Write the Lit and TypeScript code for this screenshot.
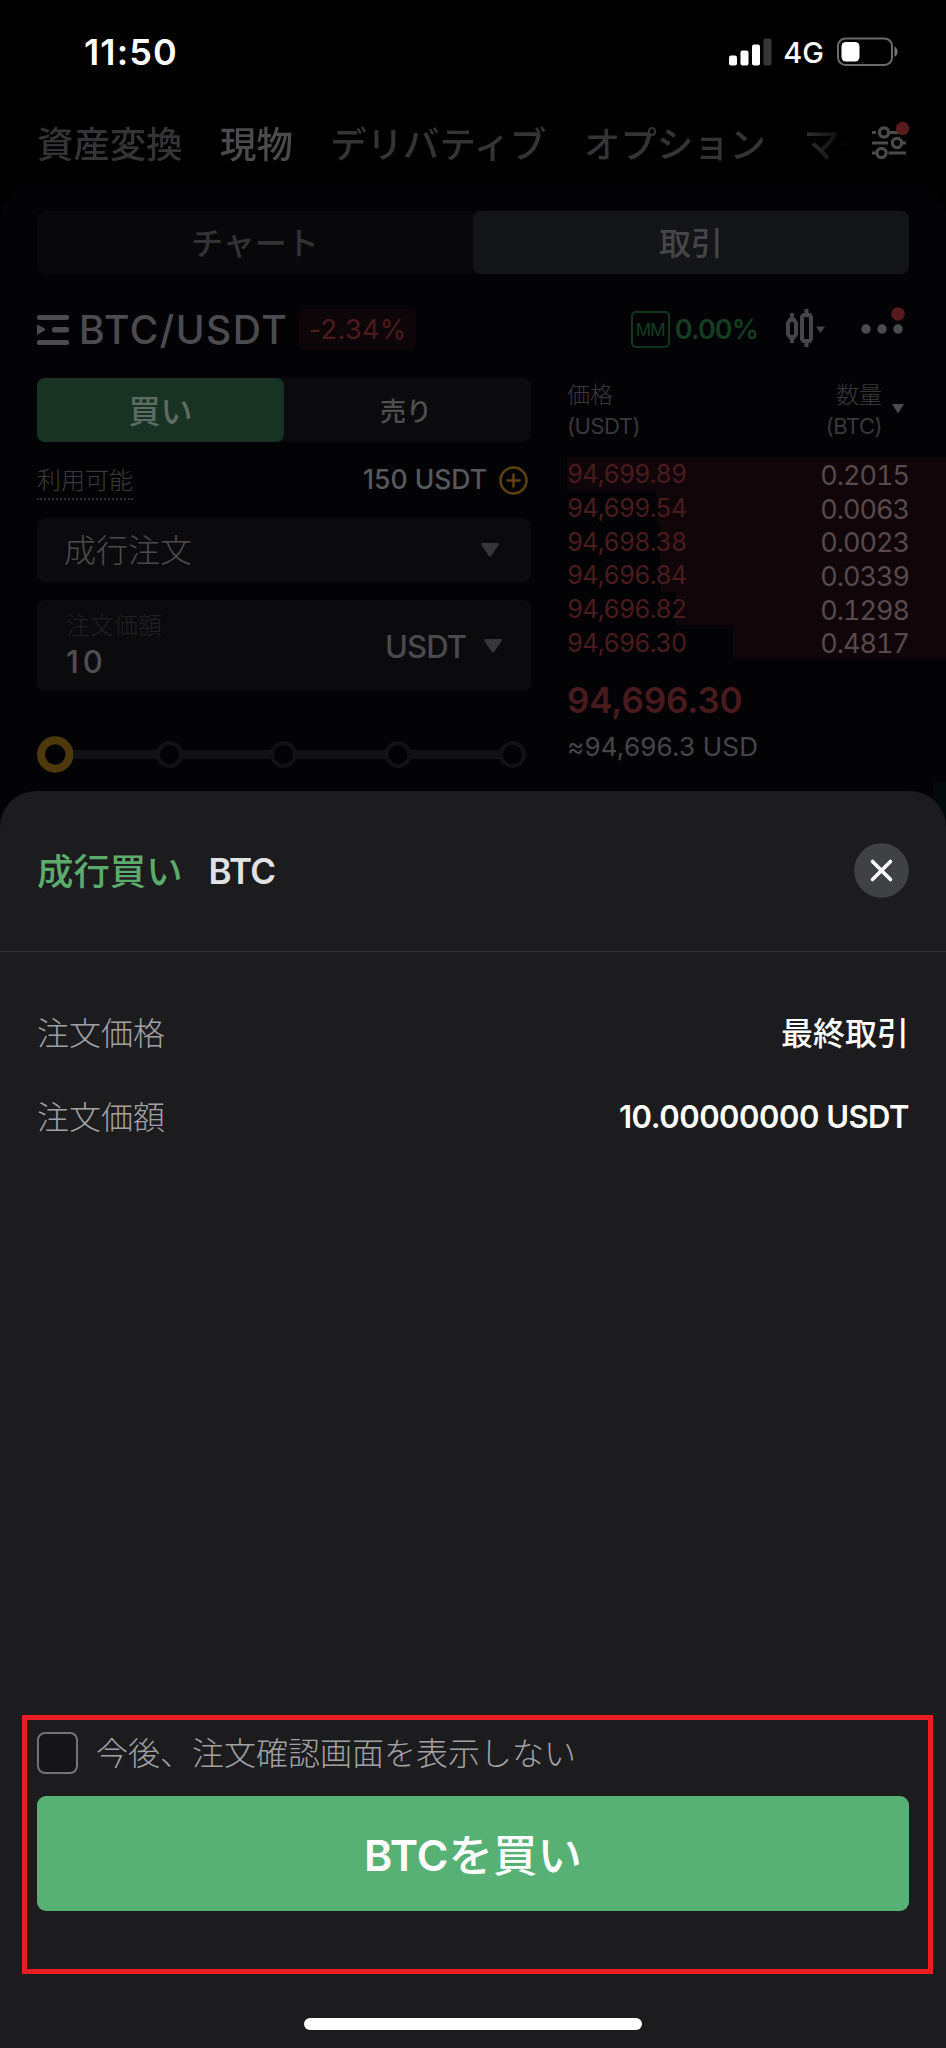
import { LitElement, html, css, svg } from "lit";
import { customElement } from "lit/decorators.js";
import { styleMap } from "lit/directives/style-map.js";

const fonts = css`
  * { box-sizing: border-box; }
  .l, .j { display: block; white-space: nowrap; line-height: 1; }
  .l { font-family: Inter, "Noto Sans CJK JP", sans-serif; }
  .j { font-family: "Noto Sans CJK JP", sans-serif; }
  svg { display: block; flex: none; }
`;

@customElement("status-bar")
class StatusBar extends LitElement {
  static styles = [fonts, css`
    :host { display: flex; height: 104px; padding: 0 48px 0 84px; align-items: center; color: #fff; }
    .time { font-size: 36px; font-weight: 600; letter-spacing: 1.1px; flex: 1; }
    .net { font-size: 29px; font-weight: 500; margin: 0 13px 0 11px; }
  `];
  render() {
    return html`
      <span class="l time">11:50</span>
      <svg width="43" height="28" viewBox="0 0 43 28">
        <rect x="0" y="17.5" width="8" height="10" rx="2" fill="#fff"/>
        <rect x="11.5" y="12.5" width="8" height="15" rx="2" fill="#fff"/>
        <rect x="23" y="6.5" width="8" height="21" rx="2" fill="#fff"/>
        <rect x="34.5" y="0.5" width="8" height="27" rx="2" fill="#363636"/>
      </svg>
      <span class="l net">4G</span>
      <svg width="61" height="30" viewBox="0 0 61 30">
        <rect x="1" y="1.5" width="54" height="26.5" rx="7.5" fill="none" stroke="#6a6a6a" stroke-width="2"/>
        <rect x="4.5" y="5" width="18" height="19.5" rx="4.5" fill="#fff"/>
        <path d="M57.5 9.5c2 1 3 3 3 5.200s-1 4.200-3 5.200z" fill="#777"/>
      </svg>`;
  }
}

@customElement("product-nav")
class ProductNav extends LitElement {
  static styles = [fonts, css`
    :host { display: flex; height: 78px; padding: 0 36px 0 37px; align-items: center; }
    .tabs { display: flex; gap: 37.500px; width: 815px; overflow: hidden; height: 78px; padding-bottom: 2px; align-items: center;
      mask-image: linear-gradient(90deg, #000 94%, transparent 100%); }
    .j { font-size: 36.400px; font-weight: 500; color: #343436; line-height: 60px; flex: none; }
    .on { color: #4b4b4d; }
    svg { margin: -2px 0 0 20px; }
  `];
  render() {
    return html`
      <div class="tabs">
        ${["資産変換", "現物", "デリバティブ", "オプション", "マー"].map(
          (t, i) => html`<span class="j ${i === 1 ? "on" : ""}">${t}</span>`)}
      </div>
      <svg width="38" height="42" viewBox="0 0 38 42" fill="none" stroke="#4b4b4d" stroke-width="3.200">
        <path d="M0 11.500h4M17 11.500h17M0 22h16M30 22h4M0 32h4M16.500 32h17.500"/>
        <circle cx="12" cy="11.500" r="4.600"/><circle cx="25" cy="22" r="4.600"/><circle cx="9.500" cy="32" r="4.600"/>
        <circle cx="30.500" cy="7.500" r="6.700" fill="#581b1d" stroke="none"/>
      </svg>`;
  }
}

@customElement("order-form")
class OrderForm extends LitElement {
  static styles = [fonts, css`
    :host { display: flex; flex-direction: column; width: 494px; }
    .side { display: grid; grid-template-columns: 1fr 1fr; height: 64px; background: #0b0b0d; border-radius: 8px; }
    .side span { display: flex; align-items: center; justify-content: center; border-radius: 8px; font-weight: 500; }
    .buy { background: #183323; color: #5d6d63; font-size: 32px; padding-bottom: 2px; }
    .sell { color: #4f4f52; font-size: 26px; padding-right: 3px; }
    .avail { display: flex; align-items: center; height: 76px; padding-right: 3px; }
    .lbl { font-size: 24px; font-weight: 300; color: #3a3a3d; line-height: 32px; padding-bottom: 3px; border-bottom: 2px dotted #303033; margin-top: 3px; }
    .bal { font-size: 26.500px; font-weight: 500; color: #58585c; margin: -1px 12px 0 auto; letter-spacing: 0; }
    .field { display: flex; align-items: center; background: #0b0b0d; border-radius: 8px; }
    .type { height: 64px; padding: 0 32px 0 27px; justify-content: space-between; }
    .type .j { font-size: 32px; font-weight: 300; color: #4b4b4e; padding-bottom: 4px; line-height: 40px; }
    .amount { height: 91px; margin-top: 18px; padding: 0 29px 0 29px; }
    .val { flex: 1; display: flex; flex-direction: column; gap: 9px; margin-top: -2px; }
    .cap { font-size: 24px; font-weight: 300; color: #202023; }
    .num { font-size: 31px; font-weight: 500; color: #4f4f53; letter-spacing: 4px; margin-top: 1px; }
    .unit { font-size: 31px; font-weight: 500; color: #4a4a4e; margin-right: 18px; letter-spacing: -0.900px; padding-top: 2px; }
    .slider { margin-top: 44px; }
  `];
  render() {
    const caret = html`<svg width="18" height="14" viewBox="0 0 18 14"><path d="M2 0h14q3 0 1.200 2.500l-6.700 10q-1.500 2-3 0l-6.700-10Q-1 0 2 0z" fill="#37373a"/></svg>`;
    return html`
      <div class="side"><span class="j buy">買い</span><span class="j sell">売り</span></div>
      <div class="avail">
        <span class="j lbl">利用可能</span><span class="l bal">150 USDT</span>
        <svg width="29" height="29" viewBox="0 0 29 29" fill="none" stroke="#5d430f" stroke-width="2.500">
          <circle cx="14.500" cy="14.500" r="13"/><path d="M14.500 7.500v14M7.500 14.500h14"/>
        </svg>
      </div>
      <div class="field type"><span class="j">成行注文</span>${caret}</div>
      <div class="field amount">
        <div class="val"><span class="j cap">注文価額</span><span class="l num">10</span></div>
        <span class="l unit">USDT</span>${caret}
      </div>
      <svg class="slider" width="494" height="38" viewBox="0 0 494 38">
        <path d="M18 19.500H476" stroke="#121214" stroke-width="9"/>
        ${[132.5, 246.5, 361, 475.5].map((x) => svg`<circle cx=${x} cy="19.500" r="11.500" fill="#030306" stroke="#121214" stroke-width="4"/>`)}
        <circle cx="18.200" cy="19.500" r="14.200" fill="#030306" stroke="#4e390d" stroke-width="8"/>
      </svg>`;
  }
}

@customElement("order-book")
class OrderBook extends LitElement {
  static styles = [fonts, css`
    :host { display: flex; flex-direction: column; width: 379px; }
    .head { display: flex; justify-content: space-between; height: 79px; padding: 4px 42px 0 0; color: #38383b; }
    .col { display: flex; flex-direction: column; gap: 10px; }
    .end { align-items: flex-end; margin-left: auto; margin-right: 10px; }
    .head .j { font-size: 23px; font-weight: 300; }
    .head .l { font-size: 22px; letter-spacing: -0.5px; }
    .head svg { margin-top: 22px; }
    .row { display: flex; justify-content: space-between; align-items: center; height: 33.700px; padding: 0 37px 0 0;
      background: linear-gradient(#10060a, #10060a) right / var(--depth) 100% no-repeat; }
    .p { font-size: 25px; font-weight: 400; color: #4b1b1d; margin-top: 2px; letter-spacing: -0.85px; font-variant-numeric: tabular-nums; }
    .q { font-size: 27px; font-weight: 400; color: #57494c; margin-top: 3px; letter-spacing: -1px; font-variant-numeric: tabular-nums; }
    .last { font-size: 35px; font-weight: 600; color: #491a1d; margin-top: 24px; letter-spacing: -0.1px; }
    .usd { font-size: 26px; color: #46464a; margin-top: 16px; letter-spacing: 0.2px; }
    .bid { width: 13px; height: 34px; margin: 22px 0 0 auto; background: #040a09; }
  `];
  rows: [string, string, number][] = [
    ["94,699.89", "0.2015", 379], ["94,699.54", "0.0063", 289], ["94,698.38", "0.0023", 286],
    ["94,696.84", "0.0339", 285], ["94,696.82", "0.1298", 270], ["94,696.30", "0.4817", 213]];
  render() {
    return html`
      <div class="head">
        <div class="col"><span class="j">価格</span><span class="l">(USDT)</span></div>
        <div class="col end"><span class="j">数量</span><span class="l">(BTC)</span></div>
        <svg width="12" height="10" viewBox="0 0 12 10"><path d="M0 0h12L6 9.500z" fill="#4a4a4d"/></svg>
      </div>
      ${this.rows.map(([p, q, w]) => html`
        <div class="row" style=${styleMap({ "--depth": `${w}px` })}>
          <span class="l p">${p}</span><span class="l q">${q}</span>
        </div>`)}
      <span class="l last">94,696.30</span>
      <span class="l usd">≈94,696.3 USD</span>
      <div class="bid"></div>`;
  }
}

@customElement("trade-screen")
class TradeScreen extends LitElement {
  static styles = [fonts, css`
    :host { display: flex; flex-direction: column; background: #000; }
    .panel { flex: 1; background: #030306; border-radius: 36px 36px 0 0; padding-top: 29px; }
    .switch { display: grid; grid-template-columns: 1fr 1fr; height: 63px; margin: 0 37px; background: #08080a; border-radius: 8px; }
    .switch span { display: flex; align-items: center; justify-content: center; font-size: 32px; font-weight: 500; color: #333335; border-radius: 8px; padding-bottom: 3px; }
    .switch .on { background: #141518; color: #464649; }
    .pair { display: flex; align-items: center; height: 104px; padding: 7px 41px 0 37px; }
    .sym { font-size: 39px; font-weight: 500; color: #4c4c50; margin-left: 10px; letter-spacing: 1.500px; }
    .chg { font-size: 27px; font-weight: 400; color: #4d1c1d; background: #0e0508; border-radius: 6px; width: 117px; height: 41px;
      line-height: 42px; text-align: center; margin-left: 11px; letter-spacing: 0.4px; }
    .mm { width: 39px; height: 37px; border: 2px solid #143420; border-radius: 5px; color: #143d22; font-size: 17px;
      line-height: 35px; text-align: right; padding-right: 3px; letter-spacing: -0.8px; margin-left: auto; }
    .fee { font-size: 27px; font-weight: 600; color: #143d22; margin: 0 27px 0 5px; letter-spacing: -0.9px; }
    .candles { margin-top: -4px; }
    .dots { margin-left: 35px; margin-top: -2px; }
    .cols { display: flex; padding-left: 37px; gap: 36px; }
  `];
  render() {
    return html`
      <status-bar></status-bar>
      <product-nav></product-nav>
      <div class="panel">
        <div class="switch"><span class="j">チャート</span><span class="j on">取引</span></div>
        <div class="pair">
          <svg width="32" height="30" viewBox="0 0 32 30" fill="#4c4c50">
            <rect width="32" height="5" rx="2"/><rect y="25" width="32" height="5" rx="2"/>
            <rect x="15" y="12" width="17" height="5.500" rx="2.500"/>
            <path d="M0 9.500l7 3.500q2 1.500 0 3L0 20z"/>
          </svg>
          <span class="l sym">BTC/USDT</span>
          <span class="l chg">-2.34%</span>
          <span class="l mm">MM</span>
          <span class="l fee">0.00%</span>
          <svg class="candles" width="41" height="38" viewBox="0 0 41 38" fill="none" stroke="#454548" stroke-width="4">
            <path d="M7 4v8M7 27v7M21.500 0v7M21.500 32v6"/>
            <path d="M5 11h4l2 3v11l-2 3H5l-2-3V14z"/><path d="M18.500 6h6l1.500 2v22l-1.500 2h-6L17 30V8z"/>
            <path d="M31 17.500h9l-4.500 6.500z" fill="#454548" stroke="none"/>
          </svg>
          <svg class="dots" width="44" height="44" viewBox="0 0 44 44" fill="#4c4c50">
            <circle cx="5" cy="22" r="4.700"/><circle cx="21" cy="22" r="4.700"/><circle cx="37" cy="22" r="4.700"/>
            <circle cx="37" cy="7" r="6.800" fill="#581b1d"/>
          </svg>
        </div>
        <div class="cols"><order-form></order-form><order-book></order-book></div>
      </div>`;
  }
}

@customElement("confirm-sheet")
class ConfirmSheet extends LitElement {
  static styles = [fonts, css`
    :host { display: flex; flex-direction: column; background: #1c1c1e; border-radius: 36px 36px 0 0; }
    .head { display: flex; align-items: center; height: 161px; padding: 0 37px 0 37px; border-bottom: 1px solid #303032; }
    .ttl { font-size: 36.400px; font-weight: 500; color: #5bab6d; padding-bottom: 3px; }
    .coin { font-size: 35px; font-weight: 600; color: #e2e2e5; margin-left: 26px; letter-spacing: -0.7px; padding-top: 1px; }
    .close { margin-left: auto; margin-top: -1px; }
    .rows { display: flex; flex-direction: column; flex: 1; padding: 40px 37px 0; }
    .row { display: flex; justify-content: space-between; align-items: center; height: 84px; }
    .k { font-size: 32px; font-weight: 300; color: #a2a2a6; padding-bottom: 7px; }
    .v { font-weight: 500; font-size: 32px; color: #fff; padding-bottom: 7px; }
    .n { font-size: 31px; font-weight: 600; color: #fff; letter-spacing: -0.5px; padding-bottom: 3px; }
    .mark { height: 259px; margin: 0 13px 0 22px; border: 5px solid #ec1c24; padding: 12px 19px 0 10px; }
    .opt { display: flex; align-items: center; height: 42px; gap: 18px; }
    .opt .k { padding-bottom: 5px; }
    .box { width: 41px; height: 42px; border: 2px solid #747478; border-radius: 8px; background: #151519; }
    .buy { display: flex; align-items: center; justify-content: center; width: 872px; height: 115px; margin-top: 22px; border-radius: 9px;
      background: #57b074; color: #fff; }
    .buy .l { font-size: 43px; font-weight: 600; padding-top: 4px; }
    .buy .j { font-size: 44.500px; font-weight: 500; }
    .home { width: 338px; height: 12px; border-radius: 6px; background: #fff; margin: 44px auto 18px; }
  `];
  render() {
    return html`
      <div class="head">
        <span class="j ttl">成行買い</span><span class="l coin">BTC</span>
        <svg class="close" width="55" height="55" viewBox="0 0 55 55">
          <circle cx="27.500" cy="27.500" r="27.300" fill="#404145"/>
          <path d="M18.500 18.500l18 18M36.500 18.500l-18 18" stroke="#fff" stroke-width="3.600" stroke-linecap="round"/>
        </svg>
      </div>
      <div class="rows">
        <div class="row"><span class="j k">注文価格</span><span class="j v">最終取引</span></div>
        <div class="row"><span class="j k">注文価額</span><span class="l n">10.00000000 USDT</span></div>
      </div>
      <div class="mark">
        <div class="opt"><div class="box"></div><span class="j k">今後、注文確認画面を表示しない</span></div>
        <div class="buy"><span class="l">BTC</span><span class="j">を買い</span></div>
      </div>
      <div class="home"></div>`;
  }
}

@customElement("app-root")
class AppRoot extends LitElement {
  static styles = css`
    :host { display: grid; width: 946px; height: 2048px; overflow: hidden; background: #000; }
    trade-screen, confirm-sheet { grid-area: 1 / 1; }
    trade-screen { height: 900px; }
    confirm-sheet { height: 1257px; align-self: end; }
  `;
  render() {
    return html`<trade-screen></trade-screen><confirm-sheet></confirm-sheet>`;
  }
}
